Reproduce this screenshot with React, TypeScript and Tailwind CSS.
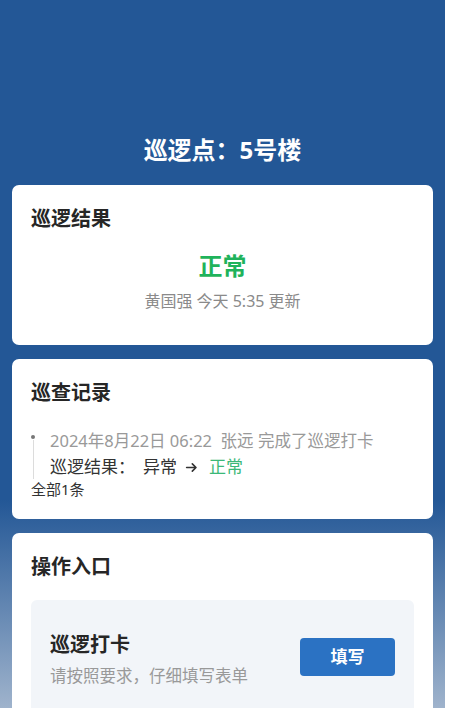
import React from "react"

const font = { fontFamily: '"Noto Sans", "Noto Sans CJK SC", sans-serif' }

function Card({ title, children, className = "" }: { title: string; children: React.ReactNode; className?: string }) {
  return (
    <section className={"rounded-[7px] bg-white px-[19px] pt-[21px] " + className}>
      <h2 className="text-[20px] font-bold leading-[26px] text-[#262626]">{title}</h2>
      {children}
    </section>
  )
}

export default function App() {
  return (
    <div
      style={font}
      className="h-[708px] w-[445px] overflow-hidden bg-[linear-gradient(180deg,#235796_0px,#235796_500px,#9fb3cc_708px)] px-3"
    >
      <h1 className="pt-[135px] text-center text-[24px] font-bold leading-[30px] text-white">巡逻点：5号楼</h1>

      <div className="mt-5 flex flex-col gap-[14px]">
        <Card title="巡逻结果" className="pb-[33px]">
          <div className="mt-[19px] text-center text-[24px] font-bold leading-[30px] text-[#1fb35b]">正常</div>
          <div className="mt-[9px] text-center text-[16px] leading-[22px] text-[#8a8a8a]">黄国强 今天 5:35 更新</div>
        </Card>

        <Card title="巡查记录" className="pb-5">
          <div className="mt-6 flex">
            <div className="flex w-1 flex-col items-center pt-[5px]">
              <span className="size-1 rounded-full bg-[#777]" />
              <span className="mt-px w-px flex-1 bg-[#dcdcdc]" />
            </div>
            <div className="ml-[15px]">
              <div className="text-[16.5px] leading-[22px] text-[#999]">2024年8月22日 06:22&nbsp; 张远 完成了巡逻打卡</div>
              <div className="mt-[3px] flex items-center text-[17px] leading-[24px] text-[#333]">
                <span>巡逻结果：</span>
                <span className="ml-2">异常</span>
                <svg className="ml-2 size-[13px]" viewBox="0 0 16 16" fill="none" stroke="#333" strokeWidth="2" strokeLinecap="round" strokeLinejoin="round">
                  <path d="M2 8h11M9 3.5 13.5 8 9 12.5" />
                </svg>
                <span className="ml-[11px] text-[#3bb878]">正常</span>
              </div>
            </div>
          </div>
          <div className="text-[15px] leading-[20px] text-[#333]">全部1条</div>
        </Card>

        <Card title="操作入口" className="pb-8">
          <div className="mt-5 flex items-center justify-between rounded-[6px] bg-[#f2f5f9] px-[19px] pb-[40px] pt-8">
            <div>
              <div className="text-[20px] font-bold leading-[26px] text-[#262626]">巡逻打卡</div>
              <div className="mt-[7px] text-[16.5px] leading-[22px] text-[#999]">请按照要求，仔细填写表单</div>
            </div>
            <button className="-mt-[6px] h-[38px] w-[95px] rounded-[4px] bg-[#2b72c3] text-[17px] font-bold text-white">填写</button>
          </div>
        </Card>
      </div>
    </div>
  )
}
